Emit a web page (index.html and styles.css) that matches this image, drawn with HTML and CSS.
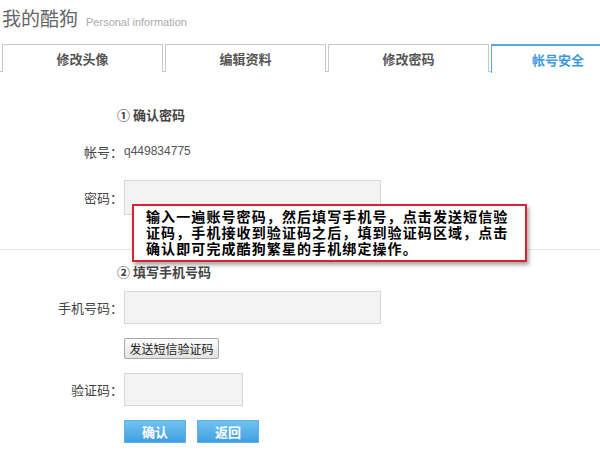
FILE: index.html
```html
<!DOCTYPE html>
<html lang="zh">
<head>
<meta charset="utf-8">
<link rel="stylesheet" href="styles.css">
</head>
<body>
<div class="page">
  <div class="header">
    <span class="title">我的酷狗</span>
    <span class="subtitle">Personal information</span>
  </div>
  <div class="tabs">
    <div class="tab">修改头像</div>
    <div class="tab">编辑资料</div>
    <div class="tab">修改密码</div>
    <div class="tab active">帐号安全</div>
  </div>
  <div class="form">
    <div class="step">① 确认密码</div>
    <div class="row account">
      <span class="label">帐号：</span>
      <span class="value">q449834775</span>
    </div>
    <div class="row pwd">
      <span class="label">密码：</span>
      <span class="input wide"></span>
    </div>
    <div class="sep"></div>
    <div class="step step2">② 填写手机号码</div>
    <div class="row phone">
      <span class="label">手机号码：</span>
      <span class="input wide"></span>
    </div>
    <div class="row send">
      <span class="label"></span>
      <span class="btn-grey">发送短信验证码</span>
    </div>
    <div class="row code">
      <span class="label">验证码：</span>
      <span class="input narrow"></span>
    </div>
    <div class="row actions">
      <span class="label"></span>
      <span class="btn-blue">确认</span>
      <span class="btn-blue">返回</span>
    </div>
    <div class="callout">输入一遍账号密码，然后填写手机号，点击发送短信验证码，手机接收到验证码之后，填到验证码区域，点击确认即可完成酷狗繁星的手机绑定操作。</div>
  </div>
</div>
</body>
</html>
```
FILE: styles.css
```css
* { box-sizing: border-box; }
html, body {
  margin: 0;
  padding: 0;
  background: #fff;
  font-family: "Noto Sans CJK SC", "Liberation Sans", sans-serif;
  color: #333;
}
.page {
  width: 600px;
  height: 464px;
  overflow: hidden;
}
.header {
  height: 44px;
  padding: 4px 0 0 2px;
  display: flex;
  align-items: baseline;
}
.title {
  font-size: 19px;
  color: #666;
  line-height: 28px;
}
.subtitle {
  font-family: "Liberation Sans", sans-serif;
  font-size: 11px;
  color: #aaa;
  margin-left: 8px;
}
.tabs {
  display: flex;
  gap: 2px;
  padding-left: 2px;
  height: 28px;
  border-bottom: 1px solid #a9d0ec;
}
.tab {
  flex: 0 0 161px;
  height: 28px;
  border: 1px solid #c8c8c8;
  border-bottom: none;
  background: #fff;
  color: #555;
  font-size: 13px;
  font-weight: bold;
  display: flex;
  align-items: center;
  justify-content: center;
}
.tab.active {
  flex: 1 1 auto;
  border: 1px solid #5ba8e0;
  border-top: 2px solid #5ba8e0;
  border-right: none;
  border-bottom: none;
  color: #3d9ae0;
  height: 29px;
  margin-bottom: -1px;
  padding-left: 24px;
}
.form {
  position: relative;
  padding-top: 33px;
}
.step {
  font-size: 13px;
  font-weight: bold;
  color: #444;
  line-height: 20px;
  padding-left: 117px;
}
.step2 { margin-top: 12px; }
.row {
  display: flex;
  align-items: center;
}
.label {
  flex: 0 0 124px;
  text-align: right;
  font-size: 13px;
  color: #444;
  padding-right: 1px;
}
.value {
  font-family: "Liberation Sans", sans-serif;
  font-size: 12px;
  color: #555;
}
.account { margin-top: 16px; height: 20px; }
.pwd { margin-top: 19px; }
.phone { margin-top: 9px; }
.send { margin-top: 14px; }
.code { margin-top: 14px; }
.actions { margin-top: 14px; gap: 11px; }
.actions .label { margin-right: -11px; }
.input {
  display: block;
  background: #f3f3f3;
  border: 1px solid #d6d6d6;
}
.input.wide { width: 257px; height: 35px; }
.phone .input.wide { height: 33px; }
.input.narrow { width: 119px; height: 33px; }
.sep {
  margin-top: 34px;
  height: 1px;
  background: #e6e6e6;
}
.btn-grey {
  display: inline-flex;
  align-items: center;
  justify-content: center;
  width: 95px;
  height: 21px;
  font-size: 12px;
  color: #222;
  border: 1px solid #a8a8a8;
  border-radius: 2px;
  background: linear-gradient(#fdfdfd, #e2e2e2);
}
.btn-blue {
  display: inline-flex;
  align-items: center;
  justify-content: center;
  width: 62px;
  height: 23px;
  font-size: 13px;
  font-weight: bold;
  color: #fff;
  background: linear-gradient(#72c2f1, #3f9fe2);
  border: 1px solid #5eb1ea;
}
.callout {
  position: absolute;
  left: 132px;
  top: 132px;
  width: 395px;
  height: 58px;
  border: 2px solid #d9232e;
  background: #fff;
  box-shadow: 2px 3px 4px rgba(0,0,0,0.35);
  padding: 2px 8px 0 12px;
  font-size: 14px;
  font-weight: bold;
  color: #000;
  line-height: 16px;
  letter-spacing: 1.1px;
}
```
